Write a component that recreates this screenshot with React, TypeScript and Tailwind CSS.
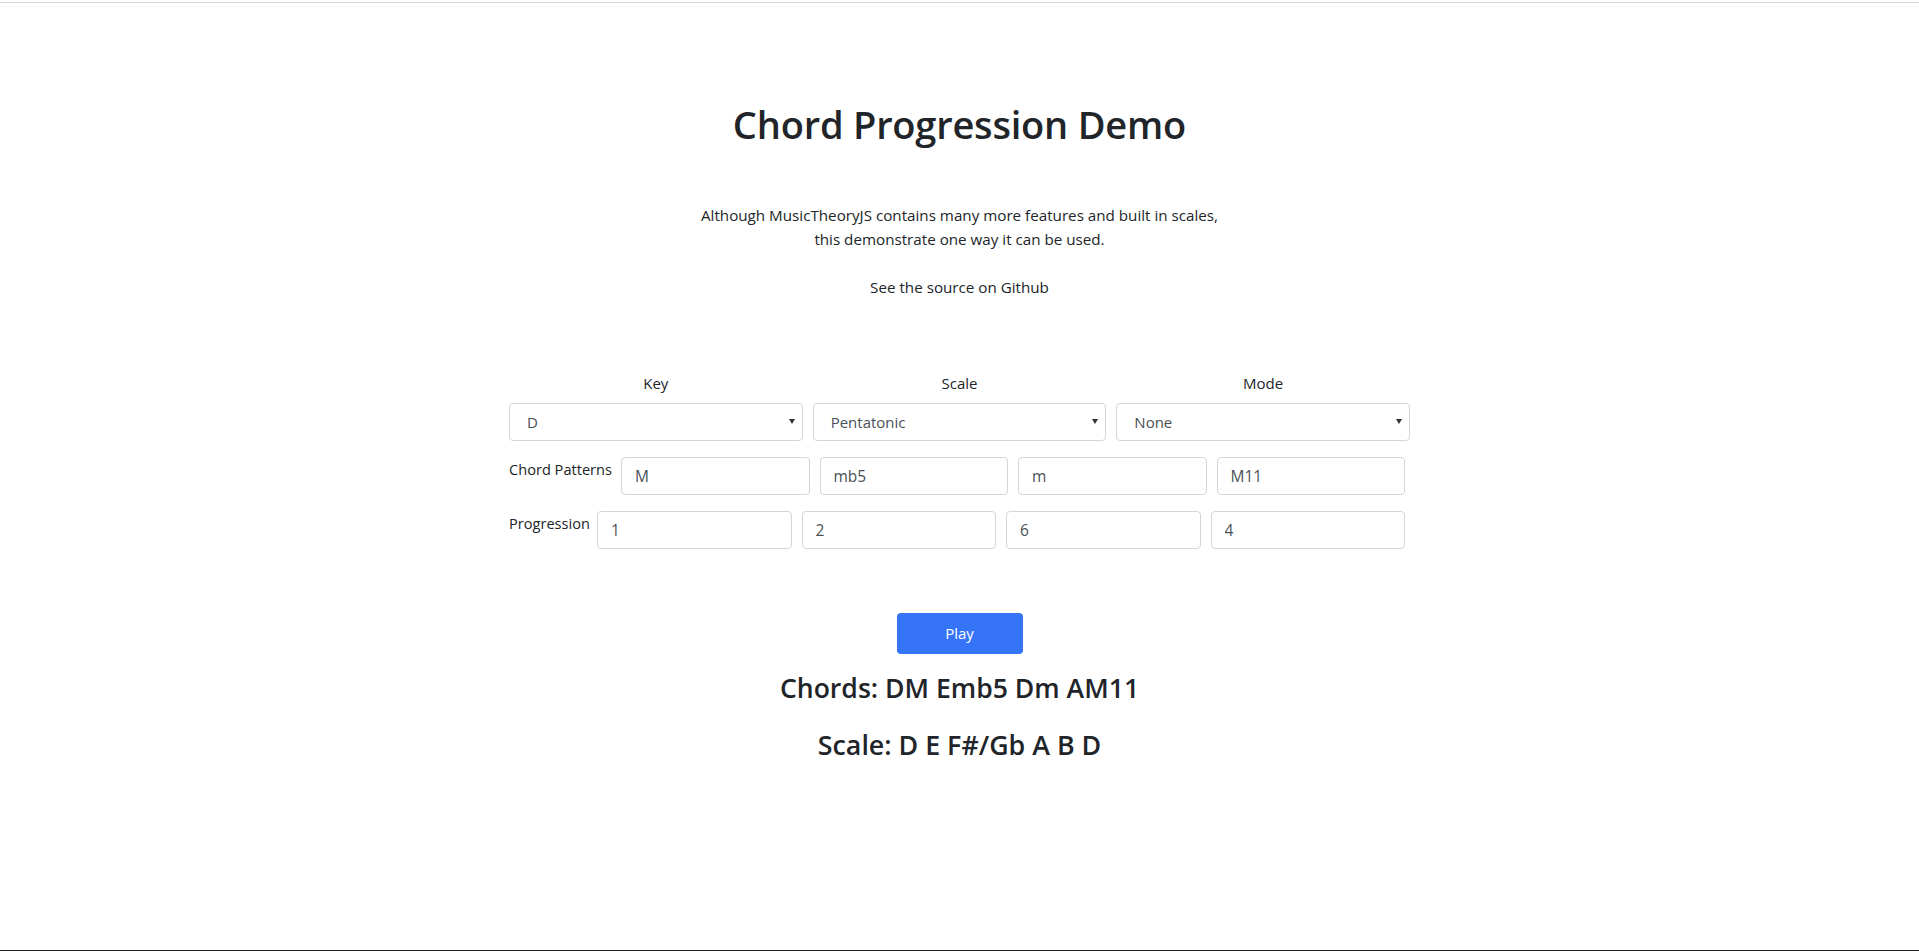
import React, { useState } from 'react';

const FONT = "font-['Open_Sans',_'Liberation_Sans',_sans-serif]";

const keys = ['C', 'C#/Db', 'D', 'D#/Eb', 'E', 'F', 'F#/Gb', 'G', 'G#/Ab', 'A', 'A#/Bb', 'B'];
const scales = ['Major', 'Minor', 'Pentatonic', 'Blues', 'Chromatic'];
const modes = ['None', 'Ionian', 'Dorian', 'Phrygian', 'Lydian', 'Mixolydian', 'Aeolian', 'Locrian'];

interface SelectProps {
  label: string;
  options: string[];
  value: string;
  onChange: (v: string) => void;
}

// dropdown with a tiny dark arrow, like the old bootstrap custom-select
const SelectField: React.FC<SelectProps> = ({ label, options, value, onChange }) => (
  <div className="flex flex-1 flex-col items-center">
    <label className="h-6 text-[15px] leading-6 text-[#212529]">{label}</label>
    <div className="relative mt-2 w-full">
      <select
        value={value}
        onChange={(e) => onChange(e.target.value)}
        className="h-[38px] w-full appearance-none rounded-[4px] border border-[#d3d6d9] bg-white pl-[17px] pr-8 text-[15px] text-[#495057] outline-none"
      >
        {options.map((o) => (
          <option key={o} value={o}>
            {o}
          </option>
        ))}
      </select>
      <span className="pointer-events-none absolute right-[8px] top-[16px] h-0 w-0 border-x-[3px] border-t-[5px] border-x-transparent border-t-[#333]" />
    </div>
  </div>
);

const TextRow: React.FC<{ label: string; values: string[]; labelWidth: string }> = ({
  label,
  values,
  labelWidth,
}) => (
  <div className="flex items-start gap-[10px]">
    <span className={`${labelWidth} shrink-0 whitespace-nowrap text-[14.6px] leading-6 text-[#212529]`}>
      {label}
    </span>
    {values.map((v, i) => (
      <input
        key={i}
        defaultValue={v}
        className="h-[38px] min-w-0 flex-1 rounded-[4px] border border-[#d3d6d9] bg-white px-[13px] text-[15.5px] text-[#495057] outline-none"
      />
    ))}
  </div>
);

export default function App() {
  const [key, setKey] = useState('D');
  const [scale, setScale] = useState('Pentatonic');
  const [mode, setMode] = useState('None');

  return (
    <div className={`flex h-[951px] flex-col bg-white ${FONT} text-[#212529]`}>
      {/* thin browser-ish lines at the top */}
      <div className="mt-[2px] h-px bg-[#d6d6d6]" />
      <div className="mt-[3px] h-px bg-[#f7f7f7]" />

      <main className="flex flex-1 flex-col items-center">
        <h1 className="mt-[93px] text-[38px] font-semibold leading-[48px] tracking-[-0.2px]">
          Chord Progression Demo
        </h1>

        <p className="mt-[55px] text-center text-[15.2px] leading-6">
          Although MusicTheoryJS contains many more features and built in scales,
          <br />
          this demonstrate one way it can be used.
          <br />
          <br />
          See the source on Github
        </p>

        <div className="mt-[72px] flex w-[901px] flex-col">
          <div className="flex gap-[10px]">
            <SelectField label="Key" options={keys} value={key} onChange={setKey} />
            <SelectField label="Scale" options={scales} value={scale} onChange={setScale} />
            <SelectField label="Mode" options={modes} value={mode} onChange={setMode} />
          </div>

          <div className="mt-[16px] pr-[5px]">
            <TextRow label="Chord Patterns" labelWidth="w-[102px]" values={['M', 'mb5', 'm', 'M11']} />
          </div>
          <div className="mt-[16px] pr-[5px]">
            <TextRow label="Progression" labelWidth="w-[78px]" values={['1', '2', '6', '4']} />
          </div>
        </div>

        <button className="mt-[64px] h-[41px] w-[126px] rounded-[4px] bg-[#3574f6] text-[15px] text-white">
          Play
        </button>

        <h3 className="mt-[17px] text-[26.6px] font-semibold leading-[34px]">Chords: DM Emb5 Dm AM11</h3>
        <h3 className="mt-[23px] text-[26.8px] font-semibold leading-[34px]">Scale: D E F#/Gb A B D</h3>
      </main>

      <div className="h-px bg-[#1f1f1f]" />
    </div>
  );
}
